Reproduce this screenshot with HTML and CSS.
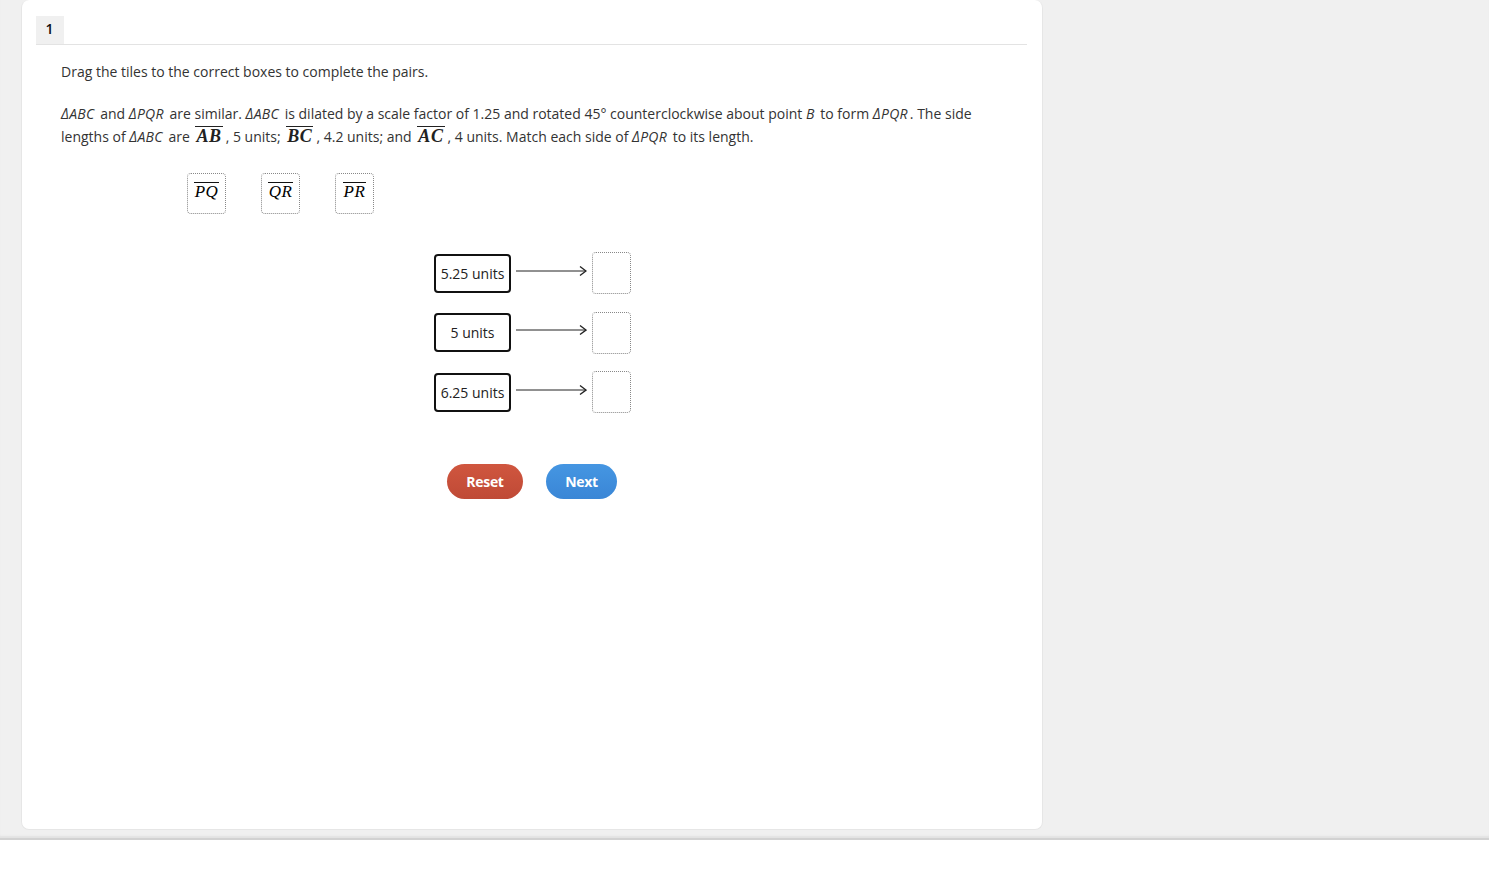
FILE: index.html
```html
<!DOCTYPE html>
<html>
<head>
<meta charset="utf-8">
<link rel="stylesheet" href="styles.css">
</head>
<body>
<div class="stage">
  <div class="card">
    <div class="header">
      <div class="qnum">1</div>
    </div>
    <div class="content">
      <p class="instr">Drag the tiles to the correct boxes to complete the pairs.</p>
      <p class="prompt"><span class="it">ΔABC</span> and <span class="it">ΔPQR</span> are similar. <span class="it">ΔABC</span> is dilated by a scale factor of 1.25 and rotated 45° counterclockwise about point <span class="it">B</span> to form <span class="it">ΔPQR</span>. The side lengths of <span class="it">ΔABC</span> are <span class="seg">AB</span>, 5 units; <span class="seg">BC</span>, 4.2 units; and <span class="seg">AC</span>, 4 units. Match each side of <span class="it">ΔPQR</span> to its length.</p>
      <div class="tiles">
        <div class="tile"><span class="mseg">PQ</span></div>
        <div class="tile"><span class="mseg">QR</span></div>
        <div class="tile"><span class="mseg">PR</span></div>
      </div>
      <div class="pairs">
        <div class="pair">
          <div class="label">5.25 units</div>
          <svg class="arrow" width="71" height="12" viewBox="0 0 71 12"><line x1="0" y1="6" x2="70" y2="6" stroke="#222" stroke-width="1"/><polyline points="64,1.5 70,6 64,10.5" fill="none" stroke="#222" stroke-width="1.4"/></svg>
          <div class="target"></div>
        </div>
        <div class="pair">
          <div class="label">5 units</div>
          <svg class="arrow" width="71" height="12" viewBox="0 0 71 12"><line x1="0" y1="6" x2="70" y2="6" stroke="#222" stroke-width="1"/><polyline points="64,1.5 70,6 64,10.5" fill="none" stroke="#222" stroke-width="1.4"/></svg>
          <div class="target"></div>
        </div>
        <div class="pair">
          <div class="label">6.25 units</div>
          <svg class="arrow" width="71" height="12" viewBox="0 0 71 12"><line x1="0" y1="6" x2="70" y2="6" stroke="#222" stroke-width="1"/><polyline points="64,1.5 70,6 64,10.5" fill="none" stroke="#222" stroke-width="1.4"/></svg>
          <div class="target"></div>
        </div>
      </div>
      <div class="buttons">
        <button class="btn reset">Reset</button>
        <button class="btn next">Next</button>
      </div>
    </div>
  </div>
</div>
</body>
</html>
```

FILE: styles.css
```css
* { box-sizing: border-box; }
html, body { margin: 0; padding: 0; background: #fff; }
body {
  font-family: "Open Sans", "Liberation Sans", sans-serif;
  color: #333;
  font-size: 14px;
}
.stage {
  height: 840px;
  background: #f0f0f0;
  border-bottom: 2px solid #d2d2d2;
  box-shadow: inset 0 -3px 2px -1px #e2e2e2;
  padding-left: 21px;
}
.card {
  width: 1022px;
  height: 830px;
  background: #fff;
  border: 1px solid #e6e6e6;
  border-top: none;
  border-radius: 8px;
  padding: 16px 15px 0 14px;
}
.header {
  display: flex;
  border-bottom: 1px solid #e3e3e3;
  height: 29px;
}
.qnum {
  width: 28px;
  height: 28px;
  background: #f0f0f0;
  color: #111;
  font-size: 14px;
  font-weight: 600;
  display: flex;
  align-items: center;
  justify-content: center;
  padding: 0 1px 3px 0;
}
.content {
  padding-left: 25px;
}
.instr {
  margin: 15px 0 0 0;
  line-height: 23px;
}
.prompt {
  margin: 19px 0 0 0;
  line-height: 23px;
  width: 940px;
}
.it {
  font-style: italic;
  letter-spacing: 0.3px;
  padding-right: 2px;
}
.seg {
  display: inline-block;
  font-family: "Liberation Serif", "DejaVu Serif", serif;
  font-style: italic;
  font-weight: bold;
  font-size: 18px;
  line-height: 18px;
  border-top: 1px solid #222;
  padding: 0 1px;
  margin: 0 3px 0 2px;
  letter-spacing: 0.6px;
  color: #222;
}
.tiles {
  display: flex;
  gap: 35px;
  margin: 25px 0 0 126px;
}
.tile {
  width: 39px;
  height: 41px;
  border: 1px dotted #888;
  border-radius: 4px;
  display: flex;
  align-items: center;
  justify-content: center;
  padding-bottom: 4px;
}
.mseg {
  display: inline-block;
  font-family: "Liberation Serif", "DejaVu Serif", serif;
  font-style: italic;
  font-size: 17px;
  line-height: 18px;
  color: #000;
  border-top: 1px solid #111;
  padding: 0 1px;
  letter-spacing: 0.5px;
}
.pairs {
  display: flex;
  flex-direction: column;
  gap: 17.5px;
  margin: 38px 0 0 373px;
}
.pair {
  display: flex;
  align-items: center;
  height: 42px;
}
.label {
  width: 77px;
  height: 39px;
  border: 2px solid #111;
  border-radius: 4px;
  display: flex;
  align-items: center;
  justify-content: center;
  color: #222;
  font-size: 14px;
}
.arrow {
  margin-left: 5px;
  margin-top: -5px;
}
.target {
  width: 39px;
  height: 42px;
  border: 1px dotted #888;
  border-radius: 4px;
  margin-left: 5px;
}
.buttons {
  display: flex;
  gap: 23px;
  margin: 51px 0 0 386px;
}
.btn {
  height: 35px;
  border: none;
  border-radius: 18px;
  color: #fff;
  font-family: "Open Sans", "Liberation Sans", sans-serif;
  font-weight: 700;
  font-size: 14px;
  padding: 0;
  letter-spacing: -0.3px;
}
.reset {
  width: 76px;
  background: linear-gradient(#d0563f, #bf4a36);
}
.next {
  width: 71px;
  background: linear-gradient(#4596e2, #3a86d6);
}
```
